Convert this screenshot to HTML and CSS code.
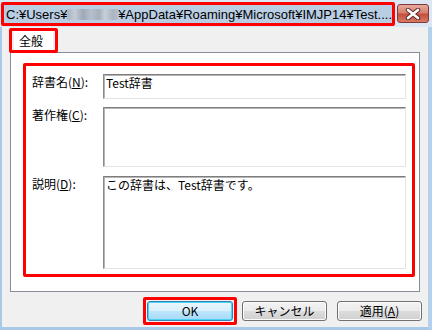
FILE: index.html
```html
<!DOCTYPE html>
<html lang="ja">
<head>
    <meta charset="UTF-8">
    <title>辞書のプロパティ</title>
    <link rel="stylesheet" href="styles.css">
</head>
<body>

    <div class="window">
        <!-- Title bar -->
        <div class="titlebar">
            <div class="title mark">C:¥Users¥<span class="blur"></span>¥AppData¥Roaming¥Microsoft¥IMJP14¥Test....</div>
            <div class="close">
                <svg width="16" height="12" viewBox="0 0 16 12">
                    <path d="M3 2 L13 10 M13 2 L3 10" stroke="#5a2a2a" stroke-width="4.5" stroke-linecap="round"/>
                    <path d="M3 2 L13 10 M13 2 L3 10" stroke="#fff" stroke-width="2.6" stroke-linecap="round"/>
                </svg>
            </div>
        </div>

        <!-- Tab -->
        <div class="tabs">
            <div class="tab-mark mark"><div class="tab">全般</div></div>
        </div>

        <!-- Tab page -->
        <div class="panel">
            <div class="fields mark">
                <label>辞書名(<u>N</u>):</label>
                <div class="edit edit-name">Test辞書</div>

                <label>著作権(<u>C</u>):</label>
                <div class="edit edit-copy"></div>

                <label>説明(<u>D</u>):</label>
                <div class="edit edit-desc">この辞書は、Test辞書です。</div>
            </div>
        </div>

        <!-- Buttons -->
        <div class="buttons">
            <div class="btn-mark mark"><button class="btn default">OK</button></div>
            <button class="btn cancel">キャンセル</button>
            <button class="btn">適用(<u>A</u>)</button>
        </div>
    </div>

</body>
</html>
```

FILE: styles.css
```css
* {
    margin: 0;
    padding: 0;
    box-sizing: border-box;
}
body {
    font-family: "Noto Sans CJK JP", "Noto Sans", sans-serif;
    font-size: 12px;
    color: #000;
    background: #fff;
}
.window {
    width: 432px;
    height: 330px;
    display: flex;
    flex-direction: column;
    background: #f0f0f0;
    border-left: 2px solid #a9c9e8;
    border-right: 4px solid #b4d0ec;
    border-bottom: 3px solid #a9c9e8;
}
.mark {
    border: 3px solid #ff0000;
    border-radius: 2px;
}

/* title bar */
.titlebar {
    height: 27px;
    margin-left: -2px;
    margin-right: -4px;
    padding: 2px 0 0 1px;
    display: flex;
    align-items: flex-start;
    background: #dbe7f4;
}
.title {
    width: 394px;
    height: 24px;
    padding-left: 2px;
    display: flex;
    align-items: center;
    white-space: nowrap;
    overflow: hidden;
    background: #b9cde3;
    font-family: "Liberation Sans", Arial, sans-serif;
    font-size: 13px;
    color: #000;
}
.blur {
    display: inline-block;
    width: 55px;
    height: 11px;
    background: linear-gradient(90deg, #a9b4c2 0, #c3cbd6 8px, #9ea8b6 16px, #b7c1ce 24px, #a5afbd 32px, #c7cfd9 38px, #aab3c0 46px, #bfc8d3 55px);
}
.close {
    width: 32px;
    height: 19px;
    margin: 2px 0 0 2px;
    display: flex;
    align-items: center;
    justify-content: center;
    border: 1px solid #7c3a3a;
    border-radius: 3px;
    background: linear-gradient(#e8a99c 0, #d7806f 45%, #c4503c 55%, #d97a64 100%);
}

/* tabs */
.tabs {
    height: 25px;
    padding: 1px 0 0 7px;
}
.tab-mark {
    position: relative;
    width: 49px;
    height: 25px;
    padding: 0 2px;
    background: #f0f0f0;
}
.tab {
    height: 100%;
    padding: 2px 0 0 5px;
    background: #fff;
    font-size: 12px;
    line-height: 16px;
}

/* tab page */
.panel {
    width: 410px;
    height: 240px;
    margin-left: 8px;
    padding: 10px 0 0 12px;
    background: #fff;
    border: 1px solid #898c95;
}
.fields {
    width: 392px;
    height: 214px;
    padding: 8px 0 0 6px;
    display: grid;
    grid-template-columns: 71px 303px;
    grid-template-rows: 25px 61px 93px;
    row-gap: 8px;
}
.fields label {
    line-height: 16px;
}
.fields label u {
    text-underline-offset: 1px;
}
.edit {
    border: 1px solid #e3e3e3;
    border-top-color: #7d7d7d;
    border-left-color: #8a8a8a;
    box-shadow: inset 1px 1px 0 #b5b5b5;
    padding: 1px 2px;
    line-height: 14px;
    background: #fff;
}
.edit-copy {
    margin-bottom: 1px;
}

/* buttons */
.buttons {
    margin-top: 5px;
    padding-right: 6px;
    display: flex;
    justify-content: flex-end;
    align-items: center;
}
.btn-mark {
    padding: 1px;
    margin-right: 5px;
}
.btn {
    width: 85px;
    height: 20px;
    font-family: "Noto Sans CJK JP", "Noto Sans", sans-serif;
    font-size: 12px;
    line-height: 16px;
    color: #000;
    border: 1px solid #707070;
    border-radius: 3px;
    background: linear-gradient(#f2f2f2 0, #ebebeb 50%, #dddddd 50%, #cfcfcf 100%);
    box-shadow: inset 0 0 0 1px #fcfcfc;
}
.btn.default {
    display: block;
    width: 86px;
    border-color: #3c7fb1;
    background: linear-gradient(#eaf6fd 0, #d9f0fc 50%, #bee6fd 50%, #a7d9f5 100%);
    box-shadow: inset 0 0 0 1px #48d4f8;
}
.btn.cancel {
    margin-right: 10px;
}
```
